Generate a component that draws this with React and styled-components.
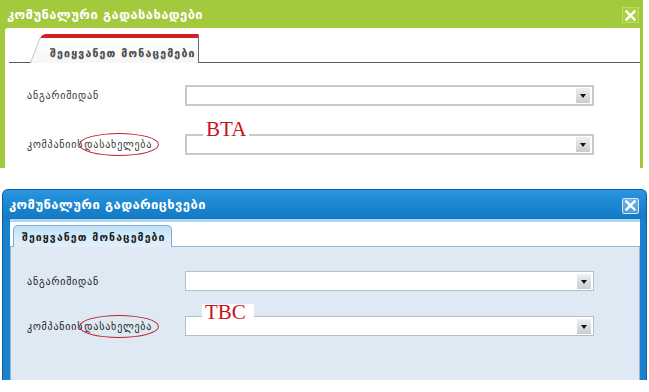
import React from 'react';
import styled, { createGlobalStyle, css } from 'styled-components';

const Global = createGlobalStyle`
  html, body { margin: 0; padding: 0; background: #fff; }
  body {
    width: 649px; height: 392px; overflow: hidden;
    font-family: "DejaVu Sans", "Noto Sans", sans-serif;
  }
`;

const Page = styled.div`
  display: flex;
  flex-direction: column;
  align-items: flex-start;
`;

/* ---------- shared dialog parts ---------- */
const Dialog = styled.div`
  display: flex;
  flex-direction: column;
  overflow: hidden;
  ${(p) =>
    p.$theme === 'green'
      ? css`
          width: 643px;
          height: 168px;
          background: #a3c93c;
        `
      : css`
          width: 643px;
          height: 190px;
          margin: 21px 0 0 2px;
          background: #1a82cc;
          border: 1px solid #0f5f9e;
          border-bottom: none;
          border-radius: 6px 6px 0 0;
        `}
`;

const Header = styled.div`
  flex: none;
  display: flex;
  align-items: center;
  justify-content: space-between;
  color: #fff;
  font-weight: bold;
  font-size: 13px;
  letter-spacing: 0.4px;
  ${(p) =>
    p.$theme === 'green'
      ? css`
          height: 28px;
          padding: 0 4px 0 7px;
        `
      : css`
          height: 29px;
          padding: 0 7px 0 6px;
          background: linear-gradient(#2a96df, #1a84cf 60%, #1479c2);
        `}
`;

const CloseBox = styled.div`
  width: 17px;
  height: 16px;
  box-sizing: border-box;
  display: flex;
  align-items: center;
  justify-content: center;
  ${(p) =>
    p.$theme === 'green'
      ? css`
          background: #abd048;
          border: 1px solid #bcdb6a;
          margin-top: 2px;
        `
      : css`
          background: linear-gradient(#6fb4e8, #4c9bd8);
          border: 1px solid #cfe7f8;
          border-radius: 2px;
          margin-top: 2px;
        `}
`;

const CloseIcon = () => (
  <svg width="11" height="11" viewBox="0 0 11 11">
    <path d="M1.5 1.5 L9.5 9.5 M9.5 1.5 L1.5 9.5" stroke="#fff" strokeWidth="2.4" strokeLinecap="square" />
  </svg>
);

const Body = styled.div`
  flex: 1;
  display: flex;
  flex-direction: column;
  ${(p) =>
    p.$theme === 'green'
      ? css`
          margin: 0 3px 0 5px;
          background: #fff;
          border-top-left-radius: 3px;
        `
      : css`
          margin: 0 6px 0 7px;
          border-top: 3px solid #acd7f4;
          background: #fff;
        `}
`;

/* ---------- tabs ---------- */
const TabBar = styled.div`
  flex: none;
  display: flex;
  align-items: flex-end;
  ${(p) =>
    p.$theme === 'green'
      ? css`
          height: 34px;
          margin-left: 4px;
          border-bottom: 1px solid #5a5a5a;
        `
      : css`
          height: 24px;
          background: #fff;
        `}
`;

const Tab = styled.div`
  position: relative;
  z-index: 0;
  display: flex;
  align-items: center;
  box-sizing: border-box;
  font-weight: bold;
  font-size: 10.5px;
  white-space: nowrap;
  ${(p) =>
    p.$theme === 'green'
      ? css`
          margin: 0 0 -1px 31px;
          width: 159px;
          height: 29px;
          padding: 4px 0 0 10px;
          letter-spacing: 1.2px;
          color: #4a4a4a;
          text-shadow: 0 1px 1px #d8d8d8;
          background: linear-gradient(#fff, #f6f6f6);
          border-top: 4px solid #d3211f;
          border-right: 1px solid #666;
          border-top-left-radius: 6px;
          &::before {
            content: '';
            position: absolute;
            left: -10px;
            bottom: 0;
            width: 16px;
            height: 25px;
            background: linear-gradient(#fff, #f6f6f6);
            border-left: 1px solid #c4c4c4;
            transform: skewX(-21deg);
            transform-origin: bottom left;
            z-index: -1;
          }
        `
      : css`
          margin: 0 0 -1px 3px;
          width: 159px;
          height: 22px;
          padding: 1px 0 0 8px;
          letter-spacing: 1.1px;
          color: #1b1b1b;
          background: linear-gradient(#bfe1f8, #d7edfb 60%, #e2effa);
          border: 1px solid #86abc9;
          border-bottom: none;
          border-radius: 5px 5px 0 0;
          z-index: 1;
        `}
`;

/* ---------- form ---------- */
const Form = styled.div`
  flex: 1;
  display: grid;
  grid-template-columns: 158px 409px;
  align-content: start;
  align-items: center;
  font-size: 10px;
  letter-spacing: 0.8px;
  color: #333;
  ${(p) =>
    p.$theme === 'green'
      ? css`
          padding: 22px 0 0 22px;
          row-gap: 28px;
          grid-auto-rows: 21px;
        `
      : css`
          padding: 24px 0 0 16px;
          row-gap: 25px;
          grid-auto-rows: 20px;
          background: #dfe9f4;
          border: 1px solid #9db5cd;
          border-bottom: none;
          color: #1a1a1a;
        `}
`;

const Label = styled.div`
  white-space: nowrap;
`;

const Circled = styled.span`
  position: relative;
  margin-left: 1px;
  &::after {
    content: '';
    position: absolute;
    left: -5px;
    right: -7px;
    top: -6px;
    bottom: -6px;
    border: 1px solid #c2202d;
    border-radius: 50%;
  }
`;

const Select = styled.div`
  position: relative;
  height: 100%;
  box-sizing: border-box;
  background: #fff;
  display: flex;
  align-items: center;
  justify-content: flex-end;
  padding-right: 2px;
  border: ${(p) => (p.$theme === 'green' ? '2px solid #c9c9c9' : '1px solid #b4c0cc')};
`;

const ArrowBtn = styled.div`
  width: 14px;
  height: 15px;
  background: linear-gradient(#eef0f2, #c8ccd0);
  display: flex;
  align-items: center;
  justify-content: center;
  &::after {
    content: '';
    border-left: 3px solid transparent;
    border-right: 3px solid transparent;
    border-top: 4px solid #111;
    margin-top: 1px;
  }
`;

const Stamp = styled.span`
  position: absolute;
  left: 16px;
  top: -15px;
  padding: 0 3px;
  background: #fff;
  color: #c8101e;
  font-family: "Liberation Serif", serif;
  font-size: 21px;
  line-height: 17px;
  letter-spacing: 0;
  ${(p) =>
    p.$theme === 'blue' &&
    css`
      top: -13px;
      padding: 0 8px 0 3px;
    `}
`;

const UtilityDialog = ({ theme, title, stamp }) => (
  <Dialog $theme={theme}>
    <Header $theme={theme}>
      <span>{title}</span>
      <CloseBox $theme={theme}>
        <CloseIcon />
      </CloseBox>
    </Header>
    <Body $theme={theme}>
      <TabBar $theme={theme}>
        <Tab $theme={theme}>შეიყვანეთ მონაცემები</Tab>
      </TabBar>
      <Form $theme={theme}>
        <Label>ანგარიშიდან</Label>
        <Select $theme={theme}>
          <ArrowBtn />
        </Select>
        <Label>
          კომპანიის<Circled>დასახელება</Circled>
        </Label>
        <Select $theme={theme}>
          <Stamp $theme={theme}>{stamp}</Stamp>
          <ArrowBtn />
        </Select>
      </Form>
    </Body>
  </Dialog>
);

export default function App() {
  return (
    <>
      <Global />
      <Page>
        <UtilityDialog theme="green" title="კომუნალური გადასახადები" stamp="BTA" />
        <UtilityDialog theme="blue" title="კომუნალური გადარიცხვები" stamp="TBC" />
      </Page>
    </>
  );
}
